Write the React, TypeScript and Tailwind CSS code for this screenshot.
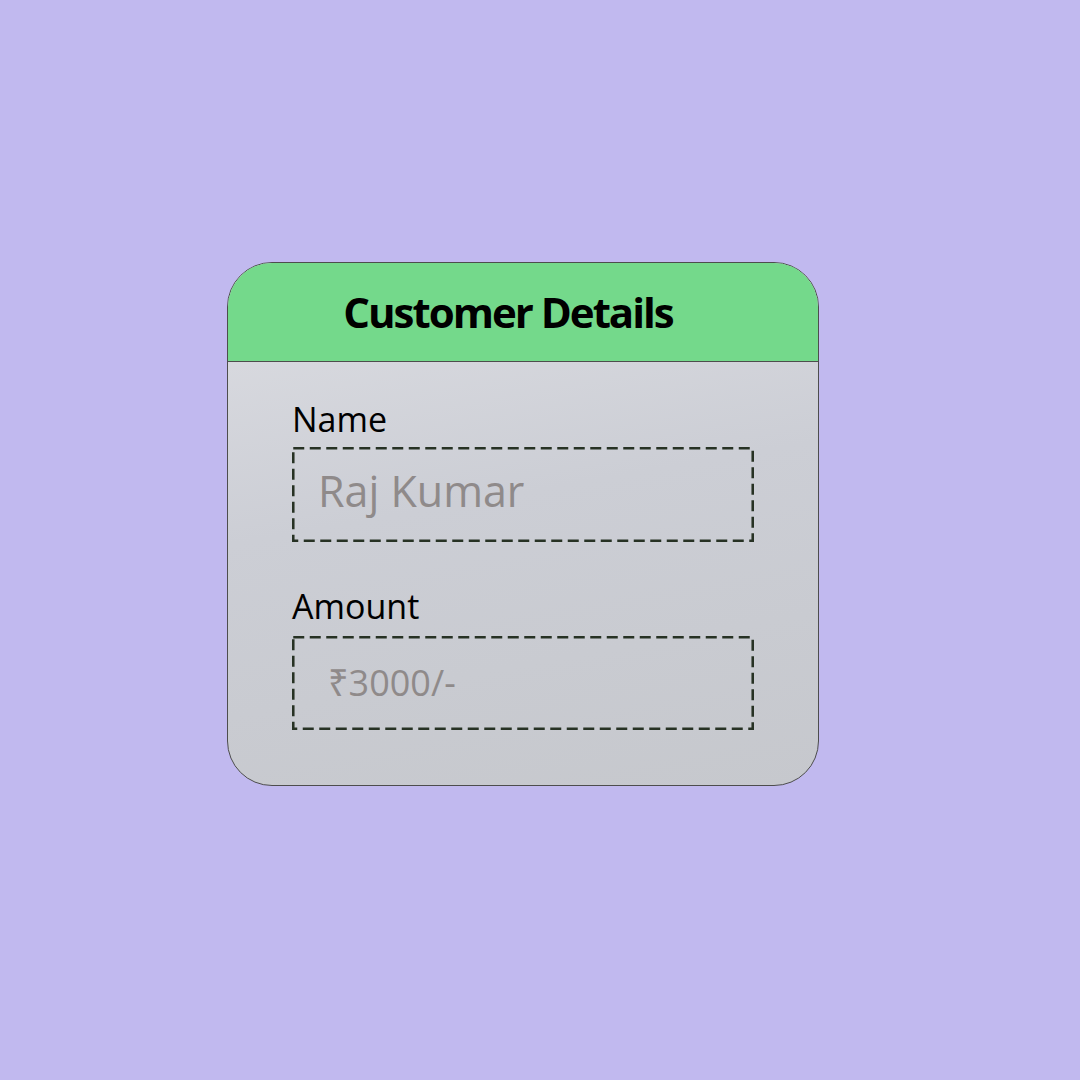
import React from "react";

function DashedBox({ children, className }: { children: React.ReactNode; className: string }) {
  return (
    <div className={"relative " + className}>
      <svg className="absolute inset-0 h-full w-full" preserveAspectRatio="none">
        <rect
          x="1.25"
          y="1.25"
          width="calc(100% - 2.5px)"
          height="calc(100% - 2.5px)"
          fill="none"
          stroke="#273224"
          strokeWidth="2.6"
          strokeDasharray="11 5.5"
        />
      </svg>
      {children}
    </div>
  );
}

export default function App() {
  return (
    <div
      className="min-h-[1080px] w-[1080px] bg-[#c1b9ef] pl-[227px] pt-[262px]"
      style={{ fontFamily: '"Open Sans", "Noto Sans", sans-serif' }}
    >
      <div className="relative flex h-[524px] w-[592px] flex-col overflow-hidden rounded-[45px] border border-[#4d4d4d] bg-[linear-gradient(170deg,#dddee3_0%,#ccced5_45%,#c6c8cd_100%)]">
        <div className="flex h-[99px] shrink-0 items-center justify-center border-b border-[#4d4d4d] bg-[#74d98b] pr-[30px]">
          <span className="text-[42px] font-bold leading-none tracking-[-2px] text-black">
            Customer Details
          </span>
        </div>
        <div className="flex flex-col pl-[64px] pt-[40px]">
          <div className="text-[34px] leading-none text-black">Name</div>
          <DashedBox className="mt-[11px] h-[95px] w-[462px]">
            <div className="pl-[26px] pt-[22px] text-[43px] leading-none text-[#8f8a8a]">Raj Kumar</div>
          </DashedBox>
          <div className="mt-[47px] text-[34px] leading-none text-black">Amount</div>
          <DashedBox className="mt-[13px] h-[94px] w-[462px]">
            <div className="pl-[36px] pt-[29px] text-[36px] leading-none text-[#8f8a8a]">₹3000/-</div>
          </DashedBox>
        </div>
      </div>
    </div>
  );
}
